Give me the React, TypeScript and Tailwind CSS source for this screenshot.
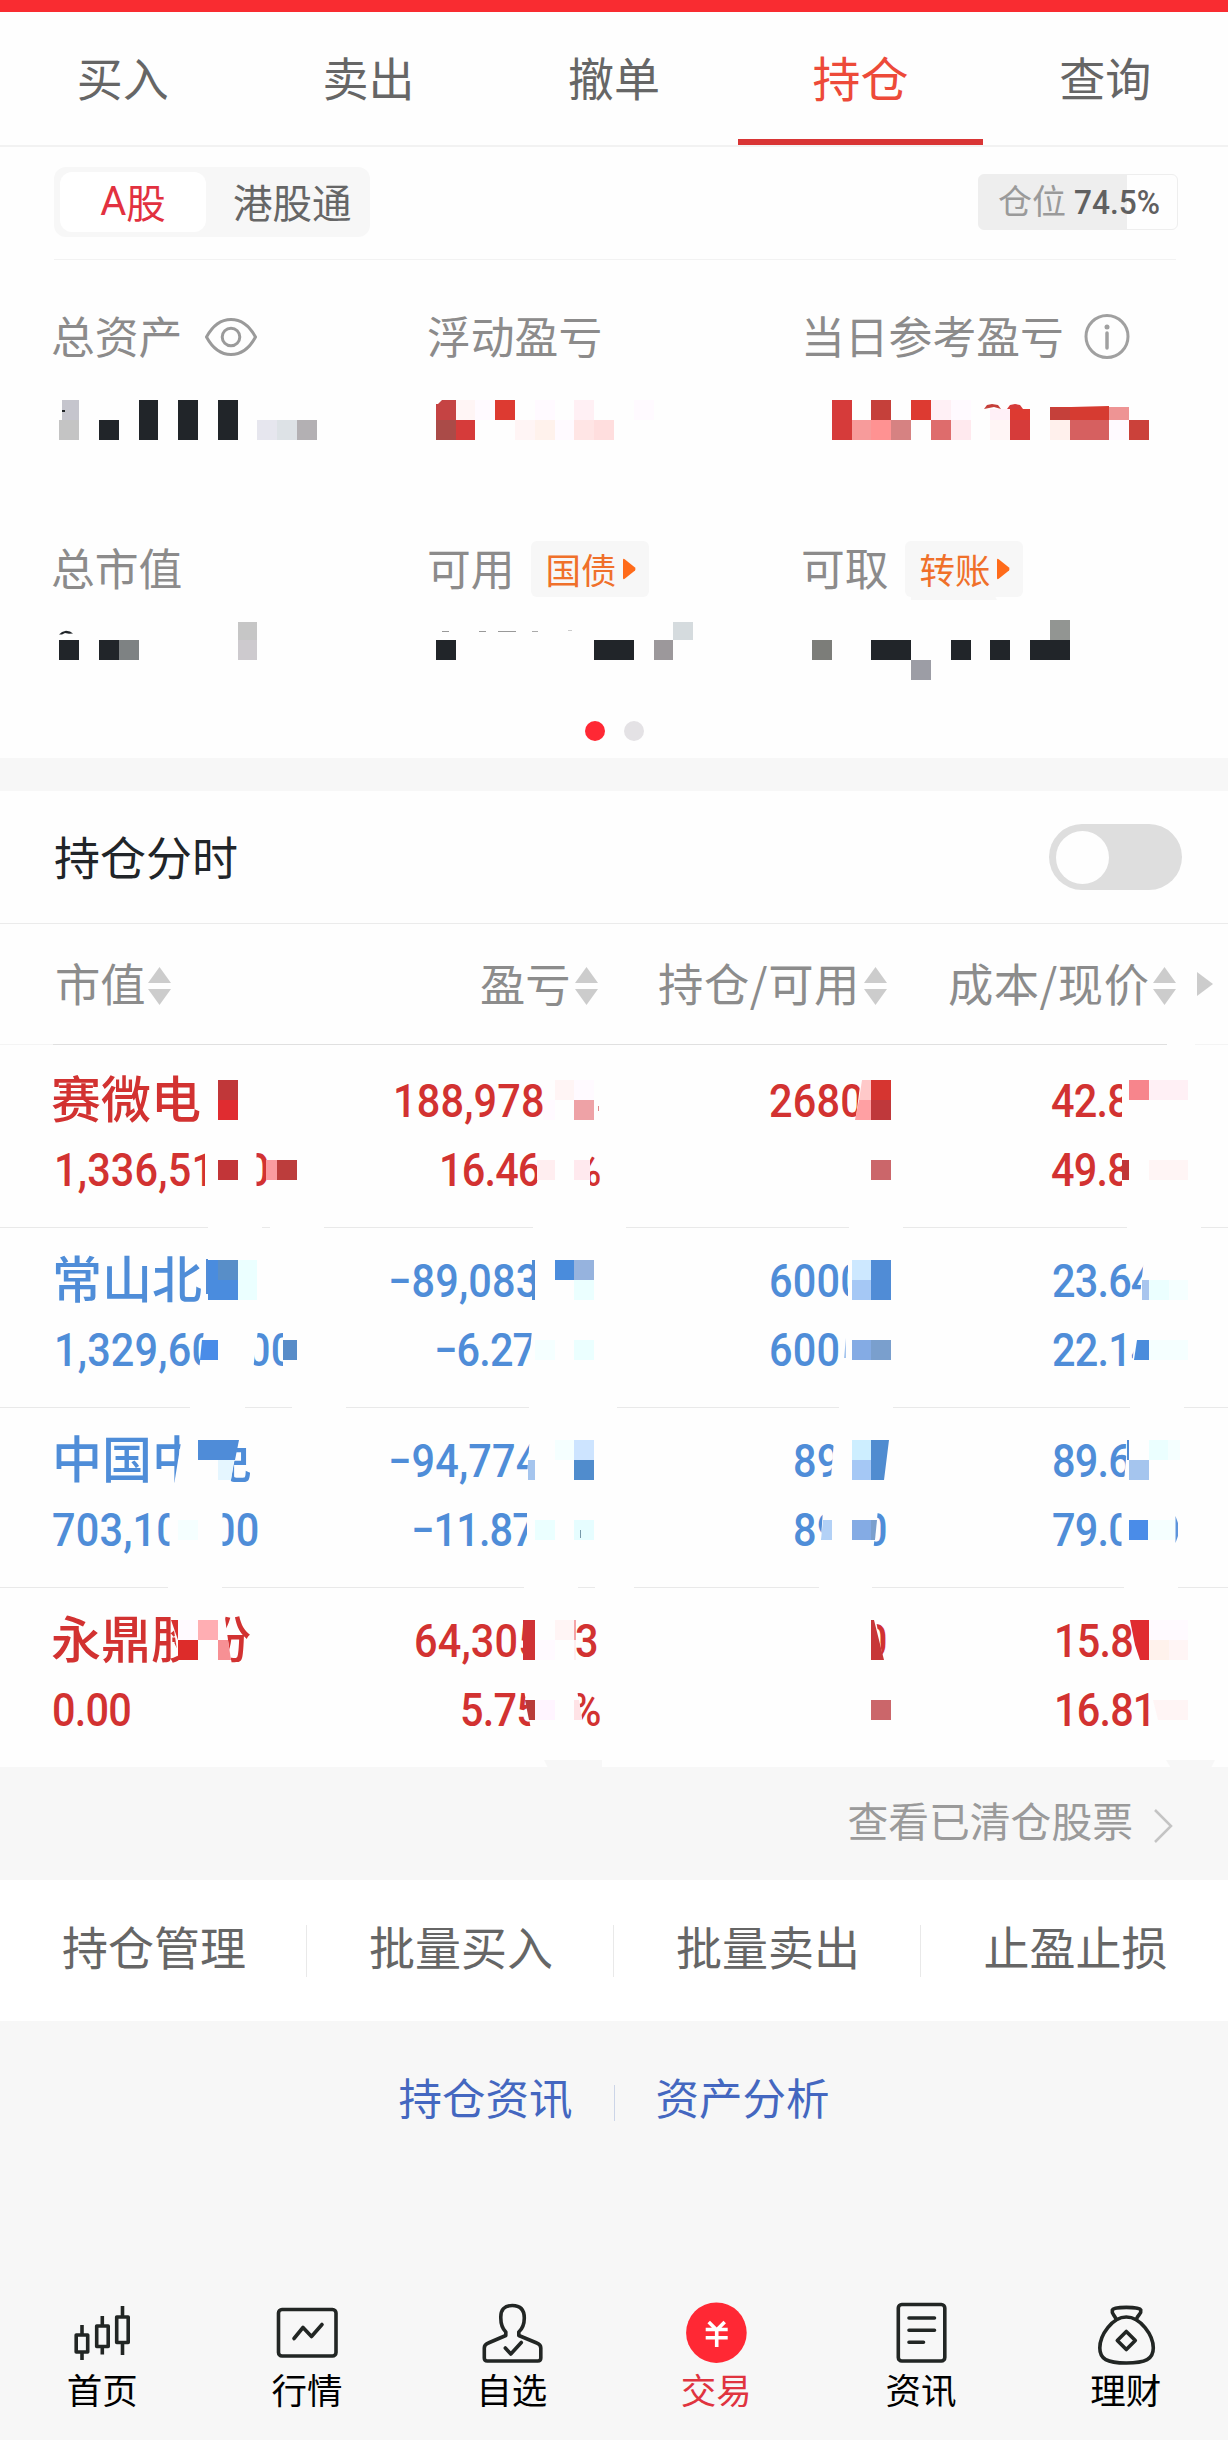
import React from "react";

type Cell = [x: number, y: number, w: number, h: number, color: string];
type Poly = [points: string, color: string];
type Piece = [x: number, text: string];

const CELL = 19.8065;
const INK = "#212529";

/** Censor tiles laid out on a 19.8 x 20 grid: column index, y, color, columns, height. */
const tile = (k: number, y: number, color: string, cols = 1, h = 20): Cell => [k * CELL, y, cols * CELL, h, color];

function Mosaic({ top, height, covers = [], cells, polys = [] }: { top: number; height: number; covers?: Poly[]; cells: Cell[]; polys?: Poly[] }) {
  return (
    <svg className="pointer-events-none absolute inset-0 h-full w-full" viewBox={`0 ${top} 1228 ${height}`} preserveAspectRatio="none">
      {covers.map(([p, c], i) => (
        <polygon key={i} points={p} fill={c} />
      ))}
      <g shapeRendering="crispEdges">
        {cells.map(([x, y, w, h, c], i) => (
          <rect key={i} x={x} y={y} width={w} height={h} fill={c} />
        ))}
      </g>
      {polys.map(([p, c], i) => (
        <polygon key={i} points={p} fill={c} />
      ))}
    </svg>
  );
}

const summaryCells: Cell[] = [
  [62, 400, 17, 20, "#c5c5cd"], tile(3, 420, "#c4c4c4"), [62, 410, 3, 2, INK],
  tile(5, 420, INK), tile(7, 400, INK, 1, 40), tile(9, 400, INK, 1, 40), tile(11, 400, INK, 1, 40),
  tile(13, 420, "#e6e6ee"), tile(14, 420, "#dde2e6"), tile(15, 420, "#b3b0b3"),
  tile(22, 400, "#c54343"), tile(22, 420, "#aa4b48"), tile(23, 400, "#fff5f5"), tile(23, 420, "#d63b3a"),
  tile(24, 400, "#fffaff"), tile(25, 400, "#dd3a31"), tile(26, 420, "#fff5f5"), tile(27, 400, "#fffaff"),
  tile(27, 420, "#fff2ec"), tile(28, 420, "#fffaff"), tile(29, 400, "#fff0f4"), tile(29, 420, "#ffe5e5"),
  tile(30, 420, "#ffdede"), tile(32, 400, "#fffaff"),
  tile(42, 400, "#d63b3a", 1, 40), tile(43, 420, "#f79b9b"), tile(44, 400, "#c5403a"), tile(44, 420, "#ff9292"),
  tile(45, 420, "#d68282"), tile(46, 400, "#dd3a31"), tile(47, 400, "#fff0f5"), tile(47, 420, "#de6c6c"),
  tile(48, 400, "#fffaff"), tile(48, 420, "#ffe9ee"), tile(50, 409, "#fff0f7", 1, 11), tile(50, 420, "#fff5f5"),
  tile(51, 409, "#dd3a31", 1, 11), tile(51, 420, "#d63b3a"), tile(53, 407, "#c5403a", 1, 13),
  tile(54, 407, "#d63b31", 2, 13), tile(56, 407, "#ee9494", 1, 13), tile(53, 420, "#fff0ec"),
  tile(54, 420, "#d66060", 2), tile(56, 420, "#fffaff"), tile(57, 420, "#cb413a"),
  tile(3, 640, INK), tile(5, 640, INK), tile(6, 640, "#7e8283"), tile(12, 622, "#c6c6c6", 1, 18), tile(12, 640, "#cdcace"),
  tile(22, 640, INK), tile(30, 640, INK, 2), tile(33, 640, "#9c989b"), tile(34, 622, "#d5dbde", 1, 18),
  [442, 631, 7, 1, "#999"], [479, 631, 7, 1, "#999"], [498, 631, 18, 1, "#999"], [532, 631, 6, 1, "#aaa"], [568, 630, 4, 1, "#ccc"],
  tile(41, 640, "#7c7d79"), tile(44, 640, INK, 2), tile(46, 660, "#9c9da5"), tile(48, 640, INK), tile(50, 640, INK),
  tile(52, 640, INK, 2), tile(53, 620, "#929592"),
];
const summaryPolys: Poly[] = [
  ["59,634.5 62,632 66,630.8 70,631.5 73,633.5 69,633.7 65,633 62,634.5", INK],
  ["984,409 987,405 992,404 998,405 1001,409 994,407", "#c5403a"],
  ["1007,409 1010,405 1015,404 1020,405 1023,409", "#d63b3a"],
  ["1052,407.5 1109,406 1109,408 1052,408", "#d63b31"],
  ["435,400 442,400 438,404 435,404", "#fefefe"],
  ["911,594 994,594 997,600 911,600", "#f7f7f7"],
];

const W = "#fefefe";
const box = (x: number, y: number, w: number, h: number): Poly => [`${x},${y} ${x + w},${y} ${x + w},${y + h} ${x},${y + h}`, W];

const tableCovers: Poly[] = [
  box(1167, 1043, 28, 3),
  box(205, 1150, 51.5, 40), box(596, 1075, 1.5, 45), ["541,1150 590,1150 590,1190 536,1190", W],
  ["861,1078 895,1078 895,1125 855,1125", W], box(1122, 1078, 70, 45), box(1122, 1150, 70, 40),
  box(208, 1226, 54, 3), box(270, 1226, 54, 3), box(533, 1226, 93, 3), box(849, 1226, 54, 3), box(1127, 1226, 74, 3),
  box(207, 1250, 60, 54), ["204,1330 258,1330 253,1370 199,1370", W], box(283, 1330, 20, 40),
  box(535, 1255, 60, 45), ["532,1330 590,1330 590,1370 528,1370", W], box(848, 1255, 44, 45), box(845.5, 1330, 50, 40),
  ["1144,1258 1190,1258 1190,1305 1139,1305", W], ["1135,1330 1190,1330 1190,1370 1132,1370", W],
  box(190, 1406, 55, 3), box(292, 1406, 54, 3), box(529, 1406, 88, 3), box(839, 1406, 54, 3), box(1130, 1406, 54, 3),
  ["183,1430 240,1430 230,1485 174,1485", W], box(169.5, 1510, 53, 42),
  ["530,1435 590,1435 590,1490 526,1490", W], ["527,1510 590,1510 590,1550 527,1550", W],
  ["834,1440 890,1440 890,1490 830,1490", W], ["823,1510 878,1510 873,1552 820,1552", W],
  ["1128,1435 1192,1435 1192,1482 1124,1482", W], box(1121.5, 1510, 54.5, 42),
  box(168, 1586, 54, 3), box(524, 1586, 54, 3), box(595, 1586, 39, 3), box(819, 1586, 53, 3), box(1124, 1586, 54, 3),
  ["171,1610 224,1610 232,1670 180,1670", W], box(523, 1615, 53, 50), ["524,1690 577,1690 584,1730 531,1730", W],
  ["860,1615 875,1615 884,1665 860,1665", W], ["1130,1615 1185,1615 1185,1665 1138,1665", W],
];

const tableCells: Cell[] = [
  tile(11, 1080, "#c03739"), tile(11, 1100, "#e02c30"), tile(11, 1160, "#c23538"),
  [266, 1160, 11, 20, "#fa9ba0"], tile(14, 1160, "#bc3d3c"),
  tile(28, 1080, "#fff5f5"), tile(29, 1080, "#fffaff"), [543, 1100, 12, 20, "#fffaff"], tile(29, 1100, "#eea2a6"),
  [598, 1106, 1, 5, "#d88"], [537, 1160, 18, 20, "#ffeef0"], [574, 1160, 16, 20, "#ffe9ee"],
  tile(44, 1080, "#d63530"), tile(44, 1100, "#bf383b"), tile(44, 1160, "#cb666a"),
  tile(57, 1080, "#f7858c"), tile(58, 1080, "#fff0f5", 2), [1122, 1160, 7, 20, "#c03739"], tile(58, 1160, "#fff5f5", 2),
  [206, 1259, 2, 35, "#528cd6"], [208, 1260, 30, 40, "#4a8cde"], tile(11, 1260, "#588ec8"), tile(12, 1260, "#ebffff", 1, 40),
  [283, 1340, 14, 20, "#588cc8"],
  [532, 1260, 3, 40, "#508cd4"], tile(28, 1260, "#4a8cdc"), tile(29, 1260, "#96b3de"), tile(29, 1280, "#ebffff"),
  tile(27, 1340, "#f5ffff"), tile(29, 1340, "#ebffff"),
  tile(43, 1260, "#cde8ff"), tile(43, 1280, "#a5c8f5"), tile(44, 1260, "#508cd6", 1, 40), tile(43, 1340, "#84abe4"), tile(44, 1340, "#7a9fcd"),
  [1142, 1280, 7, 20, "#a8c5ee"], tile(58, 1280, "#ebffff"), tile(59, 1280, "#f5ffff"), tile(58, 1340, "#f5ffff", 2),
  tile(9, 1520, "#f5ffff"), [528, 1460, 7, 20, "#a5c5ee"], tile(28, 1440, "#f5ffff"), tile(29, 1440, "#cde4ff"),
  tile(29, 1460, "#508ccd"), tile(27, 1520, "#ebffff"), tile(29, 1520, "#e6fdff"), [580, 1530, 1, 8, "#79a"],
  tile(43, 1440, "#cdeeff"), tile(43, 1460, "#a5c8f5"), tile(43, 1520, "#84abe4"),
  [1126.5, 1440, 2, 20, "#508cd4"], tile(57, 1460, "#a5c5ee"), tile(58, 1440, "#ebffff"), [1168, 1440, 12, 20, "#f5ffff"],
  tile(57, 1520, "#4a8ce8"), [1148.4, 1520, 27, 20, "#f5ffff"],
  tile(9, 1620, "#fffaff"), tile(10, 1620, "#ffaeb3"), tile(9, 1640, "#dd2c2a"),
  [523, 1620, 12, 40, "#d03235"], tile(27, 1640, "#fffaff"), tile(28, 1620, "#fff5f5"), [574, 1620, 2, 20, "#f5a5a8"], [574, 1640, 2, 20, "#ffeef0"],
  tile(27, 1700, "#fff5ff"), tile(44, 1700, "#cb666a"),
  tile(58, 1620, "#fffaff", 2), tile(58, 1640, "#fff2ec"), tile(59, 1640, "#fff5f5"),
];

const tablePolys: Poly[] = [
  ["862,1080 871,1080 871,1100 859,1100", "#ffc9c9"], ["859,1100 871,1100 871,1120 855,1120", "#ffa0a3"],
  ["202,1340 218,1340 218,1360 200,1360", "#4a8ce8"], ["1137,1340 1149,1340 1149,1360 1134,1360", "#4a8cdc"],
  ["846,1338 846,1358 844,1358", "#a5c5ee"],
  ["198,1440 239,1440 235,1460 198,1460", "#4f8cd8"], ["218,1460 234,1460 231,1480 218,1480", "#e5f6ff"],
  ["871,1440 889,1440 884,1480 871,1480", "#508cd0"], ["823,1520 832,1520 832,1540 821,1540", "#b3d1f6"],
  ["871,1520 877,1520 875,1540 871,1540", "#7a9fcd"],
  ["1175.5,1516 1178,1523 1178,1536 1175.5,1543", "#5c95dc"],
  ["171,1620 178,1620 178,1640", "#d9302f"], ["218,1640 228,1640 231,1660 218,1660", "#f79094"],
  ["525,1700 535,1700 535,1720 529,1720", "#b93a3a"], ["574,1700 579,1700 582,1720 574,1720", "#ffe3e6"],
  ["871,1620 874,1620 884,1660 871,1660", "#c73738"], ["1130,1620 1149,1620 1149,1660 1140,1660 1135,1645", "#e02c30"],
  ["1153,1700 1188,1700 1188,1720 1158,1720", "#fff5f5"],
  ["544,1760 602,1760 602,1768 548,1768", "#f7f7f7"], ["1166,1760 1215,1760 1211,1768 1171,1768", "#f7f7f7"],
];

type Row = { up: boolean; name: Piece[]; top: Piece[]; bottom: Piece[] };
const rows: Row[] = [
  { up: true, name: [[51, "赛微电"]], top: [[393, "188,978"], [769, "2680"], [1051, "42.8"]], bottom: [[54, "1,336,51"], [246, "0"], [439, "16.46"], [571, "%"], [1051, "49.8"]] },
  { up: false, name: [[52, "常山北"]], top: [[388, "−89,083"], [769, "6000"], [1052, "23.64"]], bottom: [[54, "1,329,60"], [247, "00"], [434, "−6.27"], [769, "600"], [1052, "22.14"]] },
  { up: false, name: [[52, "中国中免"]], top: [[388, "−94,774"], [793, "89"], [1052, "89.6"]], bottom: [[52, "703,10"], [212, "00"], [411, "−11.87"], [793, "89"], [864, "0"], [1052, "79.0"]] },
  { up: true, name: [[51, "永鼎股份"]], top: [[414, "64,305"], [575, "3"], [864, "0"], [1054, "15.8"]], bottom: [[52, "0.00"], [460, "5.75"], [571, "%"], [1054, "16.81"]] },
];

function NumLine({ pieces }: { pieces: Piece[] }) {
  return (
    <>
      {pieces.map(([x, t]) => (
        <span
          key={x}
          style={{ marginLeft: x }}
          className={`origin-left scale-x-[0.9] justify-self-start whitespace-nowrap font-['Roboto',sans-serif] text-[46px] leading-[60px] font-medium [grid-area:1/1] ${t.includes(".") ? "tracking-[-0.9px]" : "tracking-[0.2px]"}`}
        >
          {t}
        </span>
      ))}
    </>
  );
}

function SortArrows() {
  return (
    <svg className="mt-[3px] h-[38px] w-[23px]" viewBox="0 0 23 38" fill="#cccccc">
      <path d="M11.5 0 23 16H0zM0 22h23L11.5 38z" />
    </svg>
  );
}

function HeadCell({ label, className }: { label: string; className: string }) {
  return (
    <div className={`flex items-center justify-self-start whitespace-nowrap [grid-area:1/1] ${className}`}>
      <span className="-mt-[3px]">{label}</span>
      <SortArrows />
    </div>
  );
}

function Badge({ label }: { label: string }) {
  return (
    <span className="flex h-14 w-[118px] items-center gap-[5px] rounded-md bg-[#f7f7f7] pl-[15px] text-[35.5px] text-[#f0702a]">
      <span className="-mt-px">{label}</span>
      <svg className="h-[22px] w-[14px]" viewBox="0 0 14 22">
        <path d="M1 2q0-2 2-.5l10 8q1 1.500 0 3l-10 8q-2 1.500-2-.5z" fill="#ff6b1a" />
      </svg>
    </span>
  );
}

const navItems: { label: string; x: number; icon: React.ReactNode; active?: boolean }[] = [
  {
    label: "首页", x: 66.3,
    icon: <path strokeLinecap="butt" d="M76.500 65h11.500v17H76.500zM82.300 55v10M82.300 82v8M97 56h11.500v20.500H97zM102.600 46v10M102.600 76.500v8M117 47h11.500v25.500H117zM122.800 36v11M122.800 72.500V85" />,
  },
  {
    label: "行情", x: 271,
    icon: (<><rect x="278.500" y="39.500" width="57.500" height="46.500" rx="3.500" /><path d="m294 68.500 9-11 8.500 9 10.500-12" /></>),
  },
  {
    label: "自选", x: 475.7,
    icon: (<><path d="M505.500 62v3.500L488 73q-4 1.500-4 5v10q0 3 3 3h50.500q3 0 3-3V78q0-3.500-4-5L518.500 65.500V62Q524 57 524 48q0-12.500-12-12.500T500.500 48q0 9 5 14" /><path d="m505 78 5.500 6 10.500-11.500" /></>),
  },
  {
    label: "交易", x: 680.3, active: true,
    icon: (<><ellipse cx="716.700" cy="62.700" rx="30.300" ry="30.200" fill="#ff2834" stroke="none" /><path d="m709 52 8 8 8-8M706 59.500h22M706 67.800h22M717 59v18" stroke="#fff" strokeWidth="3.600" strokeLinecap="butt" /></>),
  },
  {
    label: "资讯", x: 885,
    icon: (<><rect x="898.300" y="34.500" width="46.500" height="56.500" rx="3.500" /><path d="M909 48h25.500M909 60.200h25.500M909 72.200h14.500" /></>),
  },
  {
    label: "理财", x: 1089.7,
    icon: (<><path d="M1126 47c-14 0-26.500 18-26.500 31 0 11 7 15 26.500 15s27-4 27-15c0-13-13-31-27-31z" /><path d="M1116 49.500c-2-5-5-5.500-4-9.500 1-3.500 27-3.500 28.500 0 1 4-3 4.500-4.500 9.500" /><path d="m1126 61.500 9 9-9 9-9-9z" /></>),
  },
];

export default function App() {
  return (
    <div className="flex h-[2440px] w-[1228px] flex-col overflow-hidden bg-[#f7f7f7] font-['Noto_Sans_CJK_SC',sans-serif] text-[#666]">
      <div className="h-3 bg-[#f92c31]" />

      <nav className="grid h-[135px] grid-cols-5 border-b-2 border-[#f2f2f2] bg-[#fefefe] text-center text-[46px] leading-[128px]">
        {["买入", "卖出", "撤单", "持仓", "查询"].map((t) =>
          t === "持仓" ? (
            <div key={t} className="-mr-px ml-px h-[133px] border-b-6 border-[#d93535] text-[48px] text-[#ed4a39]">{t}</div>
          ) : (
            <div key={t}>{t}</div>
          ),
        )}
      </nav>

      <section className="relative h-[611px] bg-[#fefefe]">
        <div className="mx-[54px] flex h-[113px] w-[1122px] items-start justify-between border-b border-[#f2f2f2] pt-5">
          <div className="flex h-[70px] w-[316px] items-center rounded-xl bg-[#f7f7f7] p-[5px] text-[39.5px]">
            <span className="ml-px flex h-[60px] w-[146px] items-center justify-center rounded-xl bg-white text-[#e23140]">
              <span className="font-['Roboto',sans-serif] text-[40px]">A</span>
              <span className="-mt-0.5">股</span>
            </span>
            <span className="-mt-0.5 flex-1 pl-[27px] whitespace-nowrap">港股通</span>
          </div>
          <div className="mt-[7px] -mr-0.5 flex h-14 w-[200px] items-center rounded-md border border-[#eee] bg-[linear-gradient(to_right,#eeeeee_148px,#fefefe_148px)] pl-[19px] text-[34px] whitespace-nowrap text-[#9a9a9a]">
            <span className="-mt-1.5">仓位</span>
            <span className="ml-2 origin-left scale-x-[0.93] font-['Roboto',sans-serif] text-[34px] font-medium text-[#606060]">74.5%</span>
          </div>
        </div>

        <div className="grid h-[120px] grid-cols-[376px_374px_1fr] items-start pt-[42px] pl-[51px] text-[43.8px] leading-[66px] text-[#8c8b8b]">
          <div className="flex items-center gap-[23px]">
            总资产
            <svg className="mt-[3px] h-[38px] w-[52px]" viewBox="0 0 52 38" fill="none" stroke="#9a9a9a" strokeWidth="3">
              <path d="M1.500 19Q11 1.500 26 1.500T50.500 19Q41 36.500 26 36.500T1.500 19z" />
              <circle cx="26" cy="19" r="8.800" />
            </svg>
          </div>
          <div>浮动盈亏</div>
          <div className="flex items-center gap-[20px]">
            当日参考盈亏
            <svg className="mt-[3px] h-[46px] w-[46px]" viewBox="0 0 46 46" fill="none" stroke="#a0a0a0" strokeWidth="3">
              <circle cx="23" cy="22.500" r="21" />
              <path d="M23 19v15" strokeWidth="3.500" strokeLinecap="round" />
              <circle cx="23" cy="13" r="2.500" fill="#a0a0a0" stroke="none" />
            </svg>
          </div>
        </div>

        <div className="mt-[112px] grid h-[160px] grid-cols-[376px_374px_1fr] items-start pt-[42px] pl-[51px] text-[43.8px] leading-[66px] text-[#8c8b8b]">
          <div>总市值</div>
          <div className="flex items-center gap-[16px]">
            可用
            <div className="mt-[4px]"><Badge label="国债" /></div>
          </div>
          <div className="flex items-center gap-[16px]">
            可取
            <div className="mt-[4px]"><Badge label="转账" /></div>
          </div>
        </div>

        <div className="mt-[69px] flex justify-center gap-[19px]">
          <span className="size-5 rounded-full bg-[#ff2834]" />
          <span className="size-5 rounded-full bg-[#e4e2e5]" />
        </div>
        <Mosaic top={147} height={611} cells={summaryCells} polys={summaryPolys} />
      </section>

      <section className="mt-[33px] flex h-[133px] items-center justify-between border-b border-[#ebebeb] bg-[#fefefe] pr-[46px] pl-[54px]">
        <h2 className="-mt-1 text-[46px] text-[#212529]">持仓分时</h2>
        <span className="flex h-[66px] w-[133px] items-center rounded-full bg-[#dedede] pl-[7px]">
          <span className="h-[53px] w-[53px] rounded-full bg-[#fefefe]" />
        </span>
      </section>

      <section className="relative h-[843px] bg-[#fefefe]">
        <div className="grid h-[120px] items-center text-[45.3px] text-[#8c8c8c]">
          <HeadCell label="市值" className="ml-[55px] gap-[2px]" />
          <HeadCell label="盈亏" className="ml-[480px] gap-[4px]" />
          <HeadCell label="持仓/可用" className="ml-[658px] gap-[4px] tracking-[0.6px]" />
          <HeadCell label="成本/现价" className="ml-[948px] gap-[4px] tracking-[0.5px]" />
          <svg className="ml-[1197px] h-6 w-4 [grid-area:1/1]" viewBox="0 0 16 24" fill="#cccccc">
            <path d="M0 0 16 12 0 24z" />
          </svg>
        </div>
        <div className="h-px bg-[#f4f4f4] px-[53px]">
          <div className="h-px bg-[#e0e0e0]" />
        </div>
        <div className="pt-[3px]">
          {rows.map((r, i) => (
            <div key={i} className={`h-[180px] pt-[23px] ${r.up ? "text-[#d23231]" : "text-[#4f8dd8]"} ${i < 3 ? "border-b border-[#e9e9e9]" : ""}`}>
              <div className="grid h-[60px] items-center">
                {r.name.map(([x, t]) => (
                  <span key={t} style={{ marginLeft: x }} className="-mt-[10px] text-[50px] leading-[60px] font-medium whitespace-nowrap [grid-area:1/1]">{t}</span>
                ))}
                <NumLine pieces={r.top} />
              </div>
              <div className="mt-[9px] grid h-[60px] items-center">
                <NumLine pieces={r.bottom} />
              </div>
            </div>
          ))}
        </div>
        <Mosaic top={924} height={843} covers={tableCovers} cells={tableCells} polys={tablePolys} />
      </section>

      <div className="flex h-[113px] items-center justify-end gap-[21px] pr-[55px] text-[40.8px] text-[#9a9a9a]">
        <span className="-mt-[7px]">查看已清仓股票</span>
        <svg className="mt-1 h-[34px] w-[19px]" viewBox="0 0 19 34" fill="none" stroke="#c4c4c4" strokeWidth="2.5">
          <path d="m1 1 16 16L1 33" />
        </svg>
      </div>

      <div className="grid h-[141px] grid-cols-4 items-center bg-white text-center text-[46px]">
        {["持仓管理", "批量买入", "批量卖出", "止盈止损"].map((t, i) => (
          <div key={t} className={`flex h-[52px] items-center justify-center pl-0.5 ${i < 3 ? "border-r border-[#e9e9e9]" : ""}`}>
            <span className="-mt-[10px]">{t}</span>
          </div>
        ))}
      </div>

      <div className="mt-[43px] flex h-[66px] items-center justify-center text-[43.5px] text-[#4467c0]">
        <span>持仓资讯</span>
        <span className="mx-[41px] mt-3 h-9 w-px bg-[#ccd5e8]" />
        <span>资产分析</span>
      </div>

      <footer className="mt-auto grid h-[140px] grid-cols-6 text-center text-[35.5px] leading-[46px] text-black">
        {navItems.map((n) => (
          <div key={n.label} className={`flex flex-col items-center ${n.active ? "text-[#e0343f]" : ""}`}>
            <svg className="h-[66px] w-[72px]" viewBox={`${n.x} 30 72 66`} fill="none" stroke="#222624" strokeWidth="3.6" strokeLinecap="round" strokeLinejoin="round">
              {n.icon}
            </svg>
            <span>{n.label}</span>
          </div>
        ))}
      </footer>
    </div>
  );
}
